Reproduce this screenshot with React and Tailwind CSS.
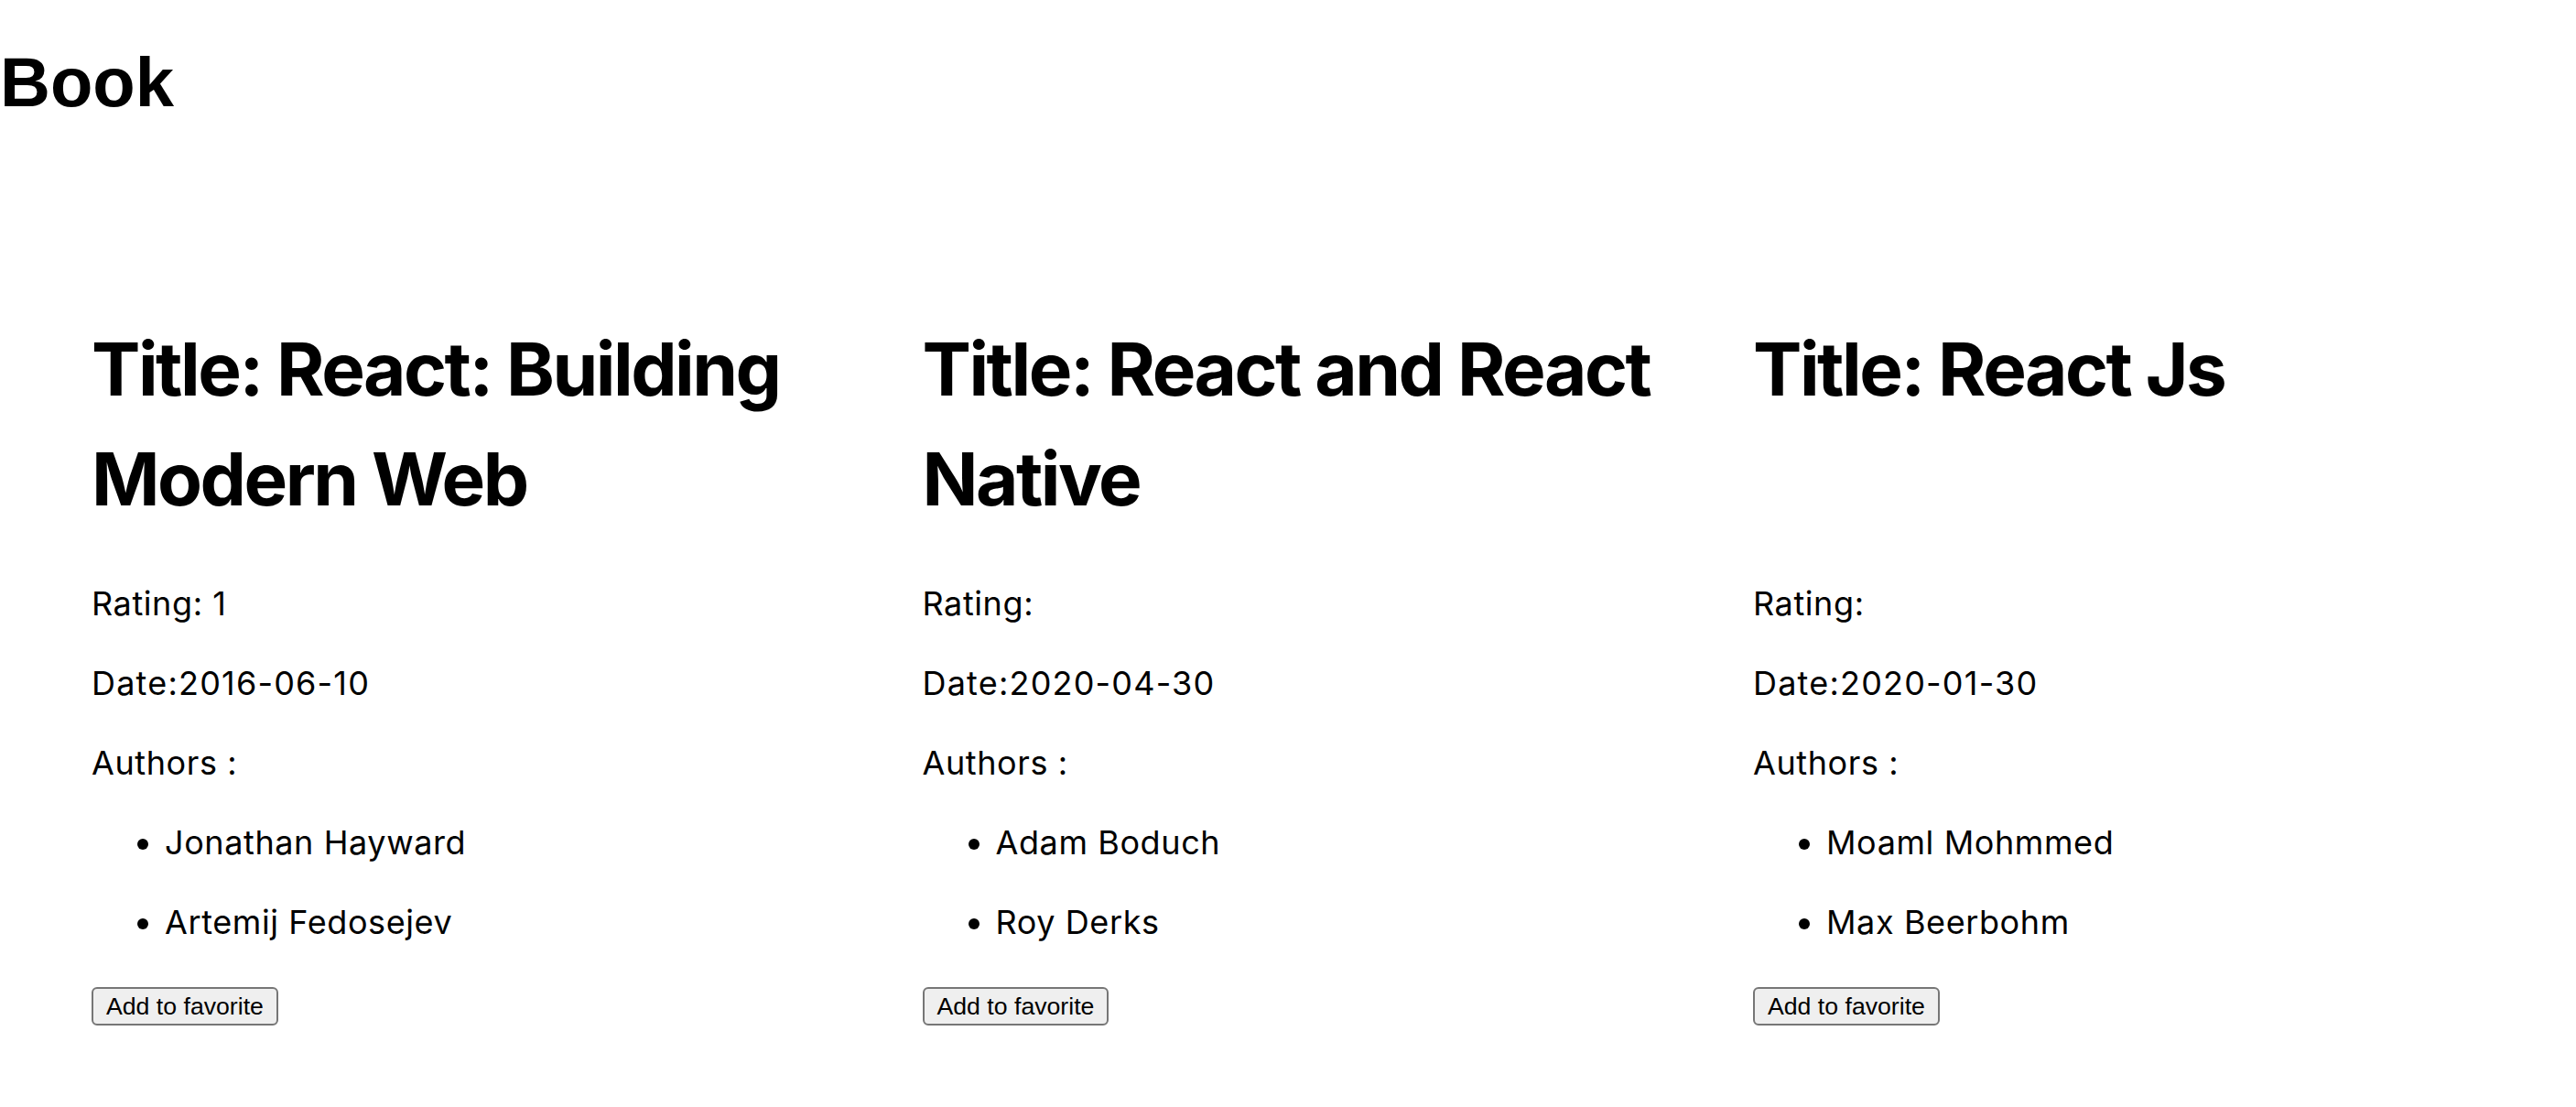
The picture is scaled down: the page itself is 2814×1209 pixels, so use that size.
import React from "react";

const books = [
  {
    id: 1,
    title: "React: Building Modern Web",
    rating: "1",
    date: "2016-06-10",
    authors: ["Jonathan Hayward", "Artemij Fedosejev"],
  },
  {
    id: 2,
    title: "React and React Native",
    rating: "",
    date: "2020-04-30",
    authors: ["Adam Boduch", "Roy Derks"],
  },
  {
    id: 3,
    title: "React Js",
    rating: "",
    date: "2020-01-30",
    authors: ["Moaml Mohmmed", "Max Beerbohm"],
  },
];

const BookCard = ({ book }) => {
  return (
    <div className="flex flex-col items-start pr-[60px]">
      <h2 className="h-[240px] text-[80px] leading-[120px] font-bold tracking-[-2.5px]">
        Title: {book.title}
      </h2>
      <div className="mt-[51px] flex flex-col gap-[36px] text-[36px] leading-[51px] tracking-[0.6px]">
        <p>Rating: {book.rating}</p>
        <p className="tracking-[1.2px]">Date:{book.date}</p>
        <p>Authors :</p>
        <ul className="list-disc pl-[80px] flex flex-col gap-[36px]">
          {book.authors.map((a) => (
            <li key={a}>{a}</li>
          ))}
        </ul>
      </div>
      <button className="mt-[45px] h-[42px] px-[14px] bg-[#efefef] border-2 border-[#767676] rounded-[6px] text-[26.67px] leading-[32px] text-black font-['Liberation_Sans',Arial,sans-serif]">
        Add to favorite
      </button>
    </div>
  );
};

const App = () => {
  return (
    <div className="min-h-screen bg-white text-black font-['Inter','Noto_Sans',sans-serif]">
      <h1 className="pt-[45px] text-[76px] leading-[90px] font-bold font-['Liberation_Sans',Arial,sans-serif]">
        Book
      </h1>
      {/* book list */}
      <div className="mt-[208px] pl-[100px] grid grid-cols-[repeat(3,907.5px)]">
        {books.map((book) => (
          <BookCard key={book.id} book={book} />
        ))}
      </div>
    </div>
  );
};

export default App;
